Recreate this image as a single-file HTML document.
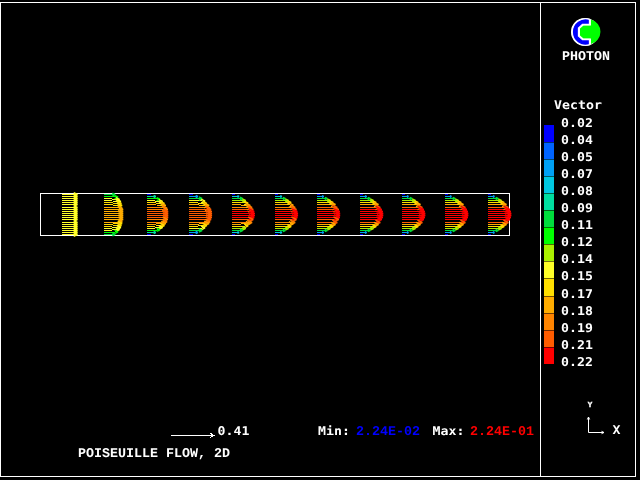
<!DOCTYPE html>
<html lang="en"><head><meta charset="utf-8"><title>PHOTON - POISEUILLE FLOW, 2D</title>
<style>html,body{margin:0;padding:0;background:#000;overflow:hidden}svg{display:block;will-change:transform}text{text-rendering:geometricPrecision}.s{font-family:"DejaVu Sans Mono","Liberation Mono",monospace;font-weight:bold;font-size:12px;fill:#fff}.r{font-family:"Liberation Mono","DejaVu Sans Mono",monospace;font-weight:bold;font-size:13.33px;fill:#fff;text-anchor:middle}.y{font-family:"Liberation Mono","DejaVu Sans Mono",monospace;font-weight:bold;font-size:7.5px;fill:#fff;stroke:#fff;stroke-width:.4px;text-anchor:middle}</style></head><body>
<svg width="640" height="480" viewBox="0 0 640 480">
<rect width="640" height="480" fill="#000"/>
<g shape-rendering="crispEdges" fill="#fff">
<rect x="0" y="2" width="636" height="1"/>
<rect x="0" y="476" width="636" height="1"/>
<rect x="0" y="2" width="1" height="475"/>
<rect x="635" y="2" width="1" height="475"/>
<rect x="540" y="2" width="1" height="475"/>
</g>
<rect x="40.5" y="193.5" width="469" height="42" fill="none" stroke="#fff" stroke-width="1" shape-rendering="crispEdges"/>
<g shape-rendering="crispEdges" stroke-width="1" fill="none" stroke-linejoin="bevel">
<path stroke="#ffff28" d="M62.0 194.5L77.4 194.5"/>
<path stroke="#ffff28" d="M62.0 196.5L77.4 196.5"/>
<path stroke="#ffff28" d="M62.0 198.5L77.4 198.5"/>
<path stroke="#ffff28" d="M62.0 200.5L77.4 200.5"/>
<path stroke="#ffff28" d="M62.0 202.5L77.4 202.5"/>
<path stroke="#ffff28" d="M62.0 204.5L77.4 204.5"/>
<path stroke="#ffff28" d="M62.0 207.5L77.4 207.5"/>
<path stroke="#ffff28" d="M62.0 209.5L77.4 209.5"/>
<path stroke="#ffff28" d="M62.0 211.5L77.4 211.5"/>
<path stroke="#ffff28" d="M62.0 213.5L77.4 213.5"/>
<path stroke="#ffff28" d="M62.0 215.5L77.4 215.5"/>
<path stroke="#ffff28" d="M62.0 217.5L77.4 217.5"/>
<path stroke="#ffff28" d="M62.0 219.5L77.4 219.5"/>
<path stroke="#ffff28" d="M62.0 222.5L77.4 222.5"/>
<path stroke="#ffff28" d="M62.0 224.5L77.4 224.5"/>
<path stroke="#ffff28" d="M62.0 226.5L77.4 226.5"/>
<path stroke="#ffff28" d="M62.0 228.5L77.4 228.5"/>
<path stroke="#ffff28" d="M62.0 230.5L77.4 230.5"/>
<path stroke="#ffff28" d="M62.0 232.5L77.4 232.5"/>
<path stroke="#ffff28" d="M62.0 234.5L77.4 234.5"/>
<path stroke="#00de3c" d="M104.0 194.5L115.0 194.5"/>
<path stroke="#00ff00" d="M104.0 196.5L118.0 197.1"/>
<path stroke="#ffff28" d="M104.0 198.5L119.5 199.5"/>
<path stroke="#ffff28" d="M104.0 200.5L120.8 201.5"/>
<path stroke="#ffde00" d="M104.0 202.5L121.4 203.5"/>
<path stroke="#ffde00" d="M104.0 204.5L122.0 205.5"/>
<path stroke="#ffac00" d="M104.0 207.5L122.3 208.1"/>
<path stroke="#ffac00" d="M104.0 209.5L123.0 209.5"/>
<path stroke="#ffac00" d="M104.0 211.5L123.0 211.5"/>
<path stroke="#ffac00" d="M104.0 213.5L123.0 213.5"/>
<path stroke="#ffac00" d="M104.0 215.5L123.0 215.5"/>
<path stroke="#ffac00" d="M104.0 217.5L123.0 217.5"/>
<path stroke="#ffac00" d="M104.0 219.5L123.0 219.5"/>
<path stroke="#ffac00" d="M104.0 222.5L122.3 221.9"/>
<path stroke="#ffde00" d="M104.0 224.5L122.0 223.5"/>
<path stroke="#ffde00" d="M104.0 226.5L121.4 225.5"/>
<path stroke="#ffff28" d="M104.0 228.5L120.8 227.5"/>
<path stroke="#ffff28" d="M104.0 230.5L119.5 229.5"/>
<path stroke="#00ff00" d="M104.0 232.5L118.0 231.9"/>
<path stroke="#00de3c" d="M104.0 234.5L115.0 234.5"/>
<path stroke="#0000ff" d="M147.0 194.5L151.0 194.5"/>
<path stroke="#00dea0" d="M147.0 196.5L155.7 196.5"/>
<path stroke="#00ff00" d="M147.0 198.5L159.8 199.1"/>
<path stroke="#ffff28" d="M147.0 200.5L162.5 201.5"/>
<path stroke="#ffde00" d="M147.0 202.5L164.4 203.5"/>
<path stroke="#ffac00" d="M147.0 204.5L165.7 205.5"/>
<path stroke="#ff8400" d="M147.0 207.5L167.0 208.1"/>
<path stroke="#ff8400" d="M147.0 209.5L167.5 209.5"/>
<path stroke="#ff5c00" d="M147.0 211.5L168.0 211.5"/>
<path stroke="#ff5c00" d="M147.0 213.5L168.0 213.5"/>
<path stroke="#ff5c00" d="M147.0 215.5L168.0 215.5"/>
<path stroke="#ff5c00" d="M147.0 217.5L168.0 217.5"/>
<path stroke="#ff8400" d="M147.0 219.5L167.5 219.5"/>
<path stroke="#ff8400" d="M147.0 222.5L167.0 221.9"/>
<path stroke="#ffac00" d="M147.0 224.5L165.7 223.5"/>
<path stroke="#ffde00" d="M147.0 226.5L164.4 225.5"/>
<path stroke="#ffff28" d="M147.0 228.5L162.5 227.5"/>
<path stroke="#00ff00" d="M147.0 230.5L159.8 229.9"/>
<path stroke="#00dea0" d="M147.0 232.5L155.7 232.5"/>
<path stroke="#0000ff" d="M147.0 234.5L151.0 234.5"/>
<path stroke="#0000ff" d="M189.0 194.5L193.0 194.5"/>
<path stroke="#00a0f5" d="M189.0 196.5L197.8 196.5"/>
<path stroke="#00de3c" d="M189.0 198.5L202.0 198.5"/>
<path stroke="#ffff28" d="M189.0 200.5L205.0 201.1"/>
<path stroke="#ffde00" d="M189.0 202.5L206.8 203.5"/>
<path stroke="#ffac00" d="M189.0 204.5L209.0 205.5"/>
<path stroke="#ff8400" d="M189.0 207.5L210.0 208.1"/>
<path stroke="#ff5c00" d="M189.0 209.5L211.0 209.5"/>
<path stroke="#ff5c00" d="M189.0 211.5L211.5 211.5"/>
<path stroke="#ff5c00" d="M189.0 213.5L211.8 213.5"/>
<path stroke="#ff5c00" d="M189.0 215.5L211.8 215.5"/>
<path stroke="#ff5c00" d="M189.0 217.5L211.5 217.5"/>
<path stroke="#ff5c00" d="M189.0 219.5L211.0 219.5"/>
<path stroke="#ff8400" d="M189.0 222.5L210.0 221.9"/>
<path stroke="#ffac00" d="M189.0 224.5L209.0 223.5"/>
<path stroke="#ffde00" d="M189.0 226.5L206.8 225.5"/>
<path stroke="#ffff28" d="M189.0 228.5L205.0 227.9"/>
<path stroke="#00de3c" d="M189.0 230.5L202.0 230.5"/>
<path stroke="#00a0f5" d="M189.0 232.5L197.8 232.5"/>
<path stroke="#0000ff" d="M189.0 234.5L193.0 234.5"/>
<path stroke="#0000ff" d="M232.0 194.5L235.2 194.5"/>
<path stroke="#00c8e1" d="M232.0 196.5L239.0 196.5"/>
<path stroke="#00de3c" d="M232.0 198.5L242.5 198.5"/>
<path stroke="#aaf000" d="M232.0 200.5L245.5 200.5"/>
<path stroke="#ffde00" d="M232.0 202.5L248.1 203.1"/>
<path stroke="#ffac00" d="M232.0 204.5L250.2 205.5"/>
<path stroke="#ff8400" d="M232.0 207.5L252.0 207.5"/>
<path stroke="#ff5c00" d="M232.0 209.5L253.2 209.5"/>
<path stroke="#ff0000" d="M232.0 211.5L254.1 211.5"/>
<path stroke="#ff0000" d="M232.0 213.5L254.5 213.5"/>
<path stroke="#ff0000" d="M232.0 215.5L254.5 215.5"/>
<path stroke="#ff0000" d="M232.0 217.5L254.1 217.5"/>
<path stroke="#ff5c00" d="M232.0 219.5L253.2 219.5"/>
<path stroke="#ff8400" d="M232.0 222.5L252.0 222.5"/>
<path stroke="#ffac00" d="M232.0 224.5L250.2 223.5"/>
<path stroke="#ffde00" d="M232.0 226.5L248.1 225.9"/>
<path stroke="#aaf000" d="M232.0 228.5L245.5 228.5"/>
<path stroke="#00de3c" d="M232.0 230.5L242.5 230.5"/>
<path stroke="#00c8e1" d="M232.0 232.5L239.0 232.5"/>
<path stroke="#0000ff" d="M232.0 234.5L235.2 234.5"/>
<path stroke="#0000ff" d="M275.0 194.5L278.0 194.5"/>
<path stroke="#00c8e1" d="M275.0 196.5L281.8 196.5"/>
<path stroke="#00de3c" d="M275.0 198.5L285.3 198.5"/>
<path stroke="#aaf000" d="M275.0 200.5L288.4 200.5"/>
<path stroke="#ffde00" d="M275.0 202.5L291.1 202.5"/>
<path stroke="#ffac00" d="M275.0 204.5L293.3 205.1"/>
<path stroke="#ff8400" d="M275.0 207.5L295.1 207.5"/>
<path stroke="#ff5c00" d="M275.0 209.5L296.4 209.5"/>
<path stroke="#ff0000" d="M275.0 211.5L297.3 211.5"/>
<path stroke="#ff0000" d="M275.0 213.5L297.8 213.5"/>
<path stroke="#ff0000" d="M275.0 215.5L297.8 215.5"/>
<path stroke="#ff0000" d="M275.0 217.5L297.3 217.5"/>
<path stroke="#ff5c00" d="M275.0 219.5L296.4 219.5"/>
<path stroke="#ff8400" d="M275.0 222.5L295.1 222.5"/>
<path stroke="#ffac00" d="M275.0 224.5L293.3 223.9"/>
<path stroke="#ffde00" d="M275.0 226.5L291.1 226.5"/>
<path stroke="#aaf000" d="M275.0 228.5L288.4 228.5"/>
<path stroke="#00de3c" d="M275.0 230.5L285.3 230.5"/>
<path stroke="#00c8e1" d="M275.0 232.5L281.8 232.5"/>
<path stroke="#0000ff" d="M275.0 234.5L278.0 234.5"/>
<path stroke="#0000ff" d="M317.0 194.5L320.0 194.5"/>
<path stroke="#00a0f5" d="M317.0 196.5L323.6 196.5"/>
<path stroke="#00de3c" d="M317.0 198.5L327.2 198.5"/>
<path stroke="#aaf000" d="M317.0 200.5L330.4 200.5"/>
<path stroke="#ffde00" d="M317.0 202.5L333.1 202.5"/>
<path stroke="#ffac00" d="M317.0 204.5L335.4 204.5"/>
<path stroke="#ff5c00" d="M317.0 207.5L337.2 207.5"/>
<path stroke="#ff5c00" d="M317.0 209.5L338.6 209.5"/>
<path stroke="#ff0000" d="M317.0 211.5L339.5 211.5"/>
<path stroke="#ff0000" d="M317.0 213.5L339.9 213.5"/>
<path stroke="#ff0000" d="M317.0 215.5L339.9 215.5"/>
<path stroke="#ff0000" d="M317.0 217.5L339.5 217.5"/>
<path stroke="#ff5c00" d="M317.0 219.5L338.6 219.5"/>
<path stroke="#ff5c00" d="M317.0 222.5L337.2 222.5"/>
<path stroke="#ffac00" d="M317.0 224.5L335.4 224.5"/>
<path stroke="#ffde00" d="M317.0 226.5L333.1 226.5"/>
<path stroke="#aaf000" d="M317.0 228.5L330.4 228.5"/>
<path stroke="#00de3c" d="M317.0 230.5L327.2 230.5"/>
<path stroke="#00a0f5" d="M317.0 232.5L323.6 232.5"/>
<path stroke="#0000ff" d="M317.0 234.5L320.0 234.5"/>
<path stroke="#0000ff" d="M360.0 194.5L363.0 194.5"/>
<path stroke="#00a0f5" d="M360.0 196.5L366.5 196.5"/>
<path stroke="#00de3c" d="M360.0 198.5L370.2 198.5"/>
<path stroke="#aaf000" d="M360.0 200.5L373.4 200.5"/>
<path stroke="#ffde00" d="M360.0 202.5L376.1 202.5"/>
<path stroke="#ffac00" d="M360.0 204.5L378.4 204.5"/>
<path stroke="#ff5c00" d="M360.0 207.5L380.2 207.5"/>
<path stroke="#ff0000" d="M360.0 209.5L381.6 209.5"/>
<path stroke="#ff0000" d="M360.0 211.5L382.5 211.5"/>
<path stroke="#ff0000" d="M360.0 213.5L383.0 213.5"/>
<path stroke="#ff0000" d="M360.0 215.5L383.0 215.5"/>
<path stroke="#ff0000" d="M360.0 217.5L382.5 217.5"/>
<path stroke="#ff0000" d="M360.0 219.5L381.6 219.5"/>
<path stroke="#ff5c00" d="M360.0 222.5L380.2 222.5"/>
<path stroke="#ffac00" d="M360.0 224.5L378.4 224.5"/>
<path stroke="#ffde00" d="M360.0 226.5L376.1 226.5"/>
<path stroke="#aaf000" d="M360.0 228.5L373.4 228.5"/>
<path stroke="#00de3c" d="M360.0 230.5L370.2 230.5"/>
<path stroke="#00a0f5" d="M360.0 232.5L366.5 232.5"/>
<path stroke="#0000ff" d="M360.0 234.5L363.0 234.5"/>
<path stroke="#0000ff" d="M402.0 194.5L405.0 194.5"/>
<path stroke="#00a0f5" d="M402.0 196.5L408.4 196.5"/>
<path stroke="#00de3c" d="M402.0 198.5L412.1 198.5"/>
<path stroke="#aaf000" d="M402.0 200.5L415.4 200.5"/>
<path stroke="#ffde00" d="M402.0 202.5L418.1 202.5"/>
<path stroke="#ffac00" d="M402.0 204.5L420.4 204.5"/>
<path stroke="#ff5c00" d="M402.0 207.5L422.3 207.5"/>
<path stroke="#ff0000" d="M402.0 209.5L423.7 209.5"/>
<path stroke="#ff0000" d="M402.0 211.5L424.6 211.5"/>
<path stroke="#ff0000" d="M402.0 213.5L425.1 213.5"/>
<path stroke="#ff0000" d="M402.0 215.5L425.1 215.5"/>
<path stroke="#ff0000" d="M402.0 217.5L424.6 217.5"/>
<path stroke="#ff0000" d="M402.0 219.5L423.7 219.5"/>
<path stroke="#ff5c00" d="M402.0 222.5L422.3 222.5"/>
<path stroke="#ffac00" d="M402.0 224.5L420.4 224.5"/>
<path stroke="#ffde00" d="M402.0 226.5L418.1 226.5"/>
<path stroke="#aaf000" d="M402.0 228.5L415.4 228.5"/>
<path stroke="#00de3c" d="M402.0 230.5L412.1 230.5"/>
<path stroke="#00a0f5" d="M402.0 232.5L408.4 232.5"/>
<path stroke="#0000ff" d="M402.0 234.5L405.0 234.5"/>
<path stroke="#0000ff" d="M445.0 194.5L448.0 194.5"/>
<path stroke="#00a0f5" d="M445.0 196.5L451.4 196.5"/>
<path stroke="#00de3c" d="M445.0 198.5L455.1 198.5"/>
<path stroke="#aaf000" d="M445.0 200.5L458.4 200.5"/>
<path stroke="#ffde00" d="M445.0 202.5L461.1 202.5"/>
<path stroke="#ffac00" d="M445.0 204.5L463.4 204.5"/>
<path stroke="#ff5c00" d="M445.0 207.5L465.3 207.5"/>
<path stroke="#ff0000" d="M445.0 209.5L466.7 209.5"/>
<path stroke="#ff0000" d="M445.0 211.5L467.6 211.5"/>
<path stroke="#ff0000" d="M445.0 213.5L468.1 213.5"/>
<path stroke="#ff0000" d="M445.0 215.5L468.1 215.5"/>
<path stroke="#ff0000" d="M445.0 217.5L467.6 217.5"/>
<path stroke="#ff0000" d="M445.0 219.5L466.7 219.5"/>
<path stroke="#ff5c00" d="M445.0 222.5L465.3 222.5"/>
<path stroke="#ffac00" d="M445.0 224.5L463.4 224.5"/>
<path stroke="#ffde00" d="M445.0 226.5L461.1 226.5"/>
<path stroke="#aaf000" d="M445.0 228.5L458.4 228.5"/>
<path stroke="#00de3c" d="M445.0 230.5L455.1 230.5"/>
<path stroke="#00a0f5" d="M445.0 232.5L451.4 232.5"/>
<path stroke="#0000ff" d="M445.0 234.5L448.0 234.5"/>
<path stroke="#0000ff" d="M488.0 194.5L491.0 194.5"/>
<path stroke="#00a0f5" d="M488.0 196.5L494.4 196.5"/>
<path stroke="#00de3c" d="M488.0 198.5L498.1 198.5"/>
<path stroke="#aaf000" d="M488.0 200.5L501.4 200.5"/>
<path stroke="#ffde00" d="M488.0 202.5L504.1 202.5"/>
<path stroke="#ffac00" d="M488.0 204.5L506.4 204.5"/>
<path stroke="#ff5c00" d="M488.0 207.5L508.3 207.5"/>
<path stroke="#ff0000" d="M488.0 209.5L509.7 209.5"/>
<path stroke="#ff0000" d="M488.0 211.5L510.6 211.5"/>
<path stroke="#ff0000" d="M488.0 213.5L511.1 213.5"/>
<path stroke="#ff0000" d="M488.0 215.5L511.1 215.5"/>
<path stroke="#ff0000" d="M488.0 217.5L510.6 217.5"/>
<path stroke="#ff0000" d="M488.0 219.5L509.7 219.5"/>
<path stroke="#ff5c00" d="M488.0 222.5L508.3 222.5"/>
<path stroke="#ffac00" d="M488.0 224.5L506.4 224.5"/>
<path stroke="#ffde00" d="M488.0 226.5L504.1 226.5"/>
<path stroke="#aaf000" d="M488.0 228.5L501.4 228.5"/>
<path stroke="#00de3c" d="M488.0 230.5L498.1 230.5"/>
<path stroke="#00a0f5" d="M488.0 232.5L494.4 232.5"/>
<path stroke="#0000ff" d="M488.0 234.5L491.0 234.5"/>
</g>
<g fill="none" stroke-width="1.45" stroke-linejoin="bevel">
<path stroke="#ffff28" d="M73.7 192.7L77.4 194.5L73.7 196.3"/>
<path stroke="#ffff28" d="M73.7 194.7L77.4 196.5L73.7 198.3"/>
<path stroke="#ffff28" d="M73.7 196.7L77.4 198.5L73.7 200.3"/>
<path stroke="#ffff28" d="M73.7 198.7L77.4 200.5L73.7 202.3"/>
<path stroke="#ffff28" d="M73.7 200.7L77.4 202.5L73.7 204.3"/>
<path stroke="#ffff28" d="M73.7 202.7L77.4 204.5L73.7 206.3"/>
<path stroke="#ffff28" d="M73.7 205.7L77.4 207.5L73.7 209.3"/>
<path stroke="#ffff28" d="M73.7 207.7L77.4 209.5L73.7 211.3"/>
<path stroke="#ffff28" d="M73.7 209.7L77.4 211.5L73.7 213.3"/>
<path stroke="#ffff28" d="M73.7 211.7L77.4 213.5L73.7 215.3"/>
<path stroke="#ffff28" d="M73.7 213.7L77.4 215.5L73.7 217.3"/>
<path stroke="#ffff28" d="M73.7 215.7L77.4 217.5L73.7 219.3"/>
<path stroke="#ffff28" d="M73.7 217.7L77.4 219.5L73.7 221.3"/>
<path stroke="#ffff28" d="M73.7 220.7L77.4 222.5L73.7 224.3"/>
<path stroke="#ffff28" d="M73.7 222.7L77.4 224.5L73.7 226.3"/>
<path stroke="#ffff28" d="M73.7 224.7L77.4 226.5L73.7 228.3"/>
<path stroke="#ffff28" d="M73.7 226.7L77.4 228.5L73.7 230.3"/>
<path stroke="#ffff28" d="M73.7 228.7L77.4 230.5L73.7 232.3"/>
<path stroke="#ffff28" d="M73.7 230.7L77.4 232.5L73.7 234.3"/>
<path stroke="#ffff28" d="M73.7 232.7L77.4 234.5L73.7 236.3"/>
<path stroke="#00de3c" d="M112.4 193.2L115.0 194.5L112.4 195.8"/>
<path stroke="#00ff00" d="M114.6 195.4L118.0 197.1L114.6 198.8"/>
<path stroke="#ffff28" d="M115.8 197.6L119.5 199.5L115.8 201.4"/>
<path stroke="#ffff28" d="M116.8 199.5L120.8 201.5L116.8 203.5"/>
<path stroke="#ffde00" d="M117.2 201.4L121.4 203.5L117.2 205.6"/>
<path stroke="#ffde00" d="M117.7 203.3L122.0 205.5L117.7 207.7"/>
<path stroke="#ffac00" d="M117.9 205.9L122.3 208.1L117.9 210.3"/>
<path stroke="#ffac00" d="M118.4 207.2L123.0 209.5L118.4 211.8"/>
<path stroke="#ffac00" d="M118.4 209.2L123.0 211.5L118.4 213.8"/>
<path stroke="#ffac00" d="M118.4 211.2L123.0 213.5L118.4 215.8"/>
<path stroke="#ffac00" d="M118.4 213.2L123.0 215.5L118.4 217.8"/>
<path stroke="#ffac00" d="M118.4 215.2L123.0 217.5L118.4 219.8"/>
<path stroke="#ffac00" d="M118.4 217.2L123.0 219.5L118.4 221.8"/>
<path stroke="#ffac00" d="M117.9 219.7L122.3 221.9L117.9 224.1"/>
<path stroke="#ffde00" d="M117.7 221.3L122.0 223.5L117.7 225.7"/>
<path stroke="#ffde00" d="M117.2 223.4L121.4 225.5L117.2 227.6"/>
<path stroke="#ffff28" d="M116.8 225.5L120.8 227.5L116.8 229.5"/>
<path stroke="#ffff28" d="M115.8 227.6L119.5 229.5L115.8 231.4"/>
<path stroke="#00ff00" d="M114.6 230.2L118.0 231.9L114.6 233.6"/>
<path stroke="#00de3c" d="M112.4 233.2L115.0 234.5L112.4 235.8"/>
<path stroke="#00dea0" d="M153.6 195.5L155.7 196.5L153.6 197.5"/>
<path stroke="#00ff00" d="M156.7 197.6L159.8 199.1L156.7 200.6"/>
<path stroke="#ffff28" d="M158.8 199.6L162.5 201.5L158.8 203.4"/>
<path stroke="#ffde00" d="M160.2 201.4L164.4 203.5L160.2 205.6"/>
<path stroke="#ffac00" d="M161.2 203.3L165.7 205.5L161.2 207.7"/>
<path stroke="#ff8400" d="M162.2 205.7L167.0 208.1L162.2 210.5"/>
<path stroke="#ff8400" d="M162.6 207.0L167.5 209.5L162.6 212.0"/>
<path stroke="#ff5c00" d="M163.0 209.0L168.0 211.5L163.0 214.0"/>
<path stroke="#ff5c00" d="M163.0 211.0L168.0 213.5L163.0 216.0"/>
<path stroke="#ff5c00" d="M163.0 213.0L168.0 215.5L163.0 218.0"/>
<path stroke="#ff5c00" d="M163.0 215.0L168.0 217.5L163.0 220.0"/>
<path stroke="#ff8400" d="M162.6 217.0L167.5 219.5L162.6 222.0"/>
<path stroke="#ff8400" d="M162.2 219.5L167.0 221.9L162.2 224.3"/>
<path stroke="#ffac00" d="M161.2 221.3L165.7 223.5L161.2 225.7"/>
<path stroke="#ffde00" d="M160.2 223.4L164.4 225.5L160.2 227.6"/>
<path stroke="#ffff28" d="M158.8 225.6L162.5 227.5L158.8 229.4"/>
<path stroke="#00ff00" d="M156.7 228.4L159.8 229.9L156.7 231.4"/>
<path stroke="#00dea0" d="M153.6 231.5L155.7 232.5L153.6 233.5"/>
<path stroke="#00a0f5" d="M195.7 195.4L197.8 196.5L195.7 197.6"/>
<path stroke="#00de3c" d="M198.9 196.9L202.0 198.5L198.9 200.1"/>
<path stroke="#ffff28" d="M201.2 199.2L205.0 201.1L201.2 203.0"/>
<path stroke="#ffde00" d="M202.5 201.4L206.8 203.5L202.5 205.6"/>
<path stroke="#ffac00" d="M204.2 203.1L209.0 205.5L204.2 207.9"/>
<path stroke="#ff8400" d="M205.0 205.6L210.0 208.1L205.0 210.6"/>
<path stroke="#ff5c00" d="M205.7 206.9L211.0 209.5L205.7 212.1"/>
<path stroke="#ff5c00" d="M206.1 208.8L211.5 211.5L206.1 214.2"/>
<path stroke="#ff5c00" d="M206.3 210.8L211.8 213.5L206.3 216.2"/>
<path stroke="#ff5c00" d="M206.3 212.8L211.8 215.5L206.3 218.2"/>
<path stroke="#ff5c00" d="M206.1 214.8L211.5 217.5L206.1 220.2"/>
<path stroke="#ff5c00" d="M205.7 216.9L211.0 219.5L205.7 222.1"/>
<path stroke="#ff8400" d="M205.0 219.4L210.0 221.9L205.0 224.4"/>
<path stroke="#ffac00" d="M204.2 221.1L209.0 223.5L204.2 225.9"/>
<path stroke="#ffde00" d="M202.5 223.4L206.8 225.5L202.5 227.6"/>
<path stroke="#ffff28" d="M201.2 226.0L205.0 227.9L201.2 229.8"/>
<path stroke="#00de3c" d="M198.9 228.9L202.0 230.5L198.9 232.1"/>
<path stroke="#00a0f5" d="M195.7 231.4L197.8 232.5L195.7 233.6"/>
<path stroke="#00c8e1" d="M237.4 195.7L239.0 196.5L237.4 197.3"/>
<path stroke="#00de3c" d="M240.0 197.2L242.5 198.5L240.0 199.8"/>
<path stroke="#aaf000" d="M242.3 198.9L245.5 200.5L242.3 202.1"/>
<path stroke="#ffde00" d="M244.2 201.2L248.1 203.1L244.2 205.0"/>
<path stroke="#ffac00" d="M245.9 203.3L250.2 205.5L245.9 207.7"/>
<path stroke="#ff8400" d="M247.2 205.1L252.0 207.5L247.2 209.9"/>
<path stroke="#ff5c00" d="M248.1 207.0L253.2 209.5L248.1 212.0"/>
<path stroke="#ff0000" d="M248.8 208.8L254.1 211.5L248.8 214.2"/>
<path stroke="#ff0000" d="M249.1 210.8L254.5 213.5L249.1 216.2"/>
<path stroke="#ff0000" d="M249.1 212.8L254.5 215.5L249.1 218.2"/>
<path stroke="#ff0000" d="M248.8 214.8L254.1 217.5L248.8 220.2"/>
<path stroke="#ff5c00" d="M248.1 217.0L253.2 219.5L248.1 222.0"/>
<path stroke="#ff8400" d="M247.2 220.1L252.0 222.5L247.2 224.9"/>
<path stroke="#ffac00" d="M245.9 221.3L250.2 223.5L245.9 225.7"/>
<path stroke="#ffde00" d="M244.2 224.0L248.1 225.9L244.2 227.8"/>
<path stroke="#aaf000" d="M242.3 226.9L245.5 228.5L242.3 230.1"/>
<path stroke="#00de3c" d="M240.0 229.2L242.5 230.5L240.0 231.8"/>
<path stroke="#00c8e1" d="M237.4 231.7L239.0 232.5L237.4 233.3"/>
<path stroke="#00c8e1" d="M280.2 195.7L281.8 196.5L280.2 197.3"/>
<path stroke="#00de3c" d="M282.9 197.3L285.3 198.5L282.9 199.7"/>
<path stroke="#aaf000" d="M285.2 198.9L288.4 200.5L285.2 202.1"/>
<path stroke="#ffde00" d="M287.2 200.6L291.1 202.5L287.2 204.4"/>
<path stroke="#ffac00" d="M288.9 202.9L293.3 205.1L288.9 207.3"/>
<path stroke="#ff8400" d="M290.3 205.1L295.1 207.5L290.3 209.9"/>
<path stroke="#ff5c00" d="M291.3 206.9L296.4 209.5L291.3 212.1"/>
<path stroke="#ff0000" d="M292.0 208.8L297.3 211.5L292.0 214.2"/>
<path stroke="#ff0000" d="M292.3 210.8L297.8 213.5L292.3 216.2"/>
<path stroke="#ff0000" d="M292.3 212.8L297.8 215.5L292.3 218.2"/>
<path stroke="#ff0000" d="M292.0 214.8L297.3 217.5L292.0 220.2"/>
<path stroke="#ff5c00" d="M291.3 216.9L296.4 219.5L291.3 222.1"/>
<path stroke="#ff8400" d="M290.3 220.1L295.1 222.5L290.3 224.9"/>
<path stroke="#ffac00" d="M288.9 221.7L293.3 223.9L288.9 226.1"/>
<path stroke="#ffde00" d="M287.2 224.6L291.1 226.5L287.2 228.4"/>
<path stroke="#aaf000" d="M285.2 226.9L288.4 228.5L285.2 230.1"/>
<path stroke="#00de3c" d="M282.9 229.3L285.3 230.5L282.9 231.7"/>
<path stroke="#00c8e1" d="M280.2 231.7L281.8 232.5L280.2 233.3"/>
<path stroke="#00a0f5" d="M322.0 195.7L323.6 196.5L322.0 197.3"/>
<path stroke="#00de3c" d="M324.8 197.3L327.2 198.5L324.8 199.7"/>
<path stroke="#aaf000" d="M327.2 198.9L330.4 200.5L327.2 202.1"/>
<path stroke="#ffde00" d="M329.2 200.6L333.1 202.5L329.2 204.4"/>
<path stroke="#ffac00" d="M331.0 202.3L335.4 204.5L331.0 206.7"/>
<path stroke="#ff5c00" d="M332.3 205.1L337.2 207.5L332.3 209.9"/>
<path stroke="#ff5c00" d="M333.4 206.9L338.6 209.5L333.4 212.1"/>
<path stroke="#ff0000" d="M334.1 208.8L339.5 211.5L334.1 214.2"/>
<path stroke="#ff0000" d="M334.4 210.8L339.9 213.5L334.4 216.2"/>
<path stroke="#ff0000" d="M334.4 212.8L339.9 215.5L334.4 218.2"/>
<path stroke="#ff0000" d="M334.1 214.8L339.5 217.5L334.1 220.2"/>
<path stroke="#ff5c00" d="M333.4 216.9L338.6 219.5L333.4 222.1"/>
<path stroke="#ff5c00" d="M332.3 220.1L337.2 222.5L332.3 224.9"/>
<path stroke="#ffac00" d="M331.0 222.3L335.4 224.5L331.0 226.7"/>
<path stroke="#ffde00" d="M329.2 224.6L333.1 226.5L329.2 228.4"/>
<path stroke="#aaf000" d="M327.2 226.9L330.4 228.5L327.2 230.1"/>
<path stroke="#00de3c" d="M324.8 229.3L327.2 230.5L324.8 231.7"/>
<path stroke="#00a0f5" d="M322.0 231.7L323.6 232.5L322.0 233.3"/>
<path stroke="#00a0f5" d="M364.9 195.7L366.5 196.5L364.9 197.3"/>
<path stroke="#00de3c" d="M367.7 197.3L370.2 198.5L367.7 199.7"/>
<path stroke="#aaf000" d="M370.2 198.9L373.4 200.5L370.2 202.1"/>
<path stroke="#ffde00" d="M372.3 200.6L376.1 202.5L372.3 204.4"/>
<path stroke="#ffac00" d="M374.0 202.3L378.4 204.5L374.0 206.7"/>
<path stroke="#ff5c00" d="M375.4 205.1L380.2 207.5L375.4 209.9"/>
<path stroke="#ff0000" d="M376.4 206.9L381.6 209.5L376.4 212.1"/>
<path stroke="#ff0000" d="M377.1 208.8L382.5 211.5L377.1 214.2"/>
<path stroke="#ff0000" d="M377.5 210.7L383.0 213.5L377.5 216.3"/>
<path stroke="#ff0000" d="M377.5 212.7L383.0 215.5L377.5 218.3"/>
<path stroke="#ff0000" d="M377.1 214.8L382.5 217.5L377.1 220.2"/>
<path stroke="#ff0000" d="M376.4 216.9L381.6 219.5L376.4 222.1"/>
<path stroke="#ff5c00" d="M375.4 220.1L380.2 222.5L375.4 224.9"/>
<path stroke="#ffac00" d="M374.0 222.3L378.4 224.5L374.0 226.7"/>
<path stroke="#ffde00" d="M372.3 224.6L376.1 226.5L372.3 228.4"/>
<path stroke="#aaf000" d="M370.2 226.9L373.4 228.5L370.2 230.1"/>
<path stroke="#00de3c" d="M367.7 229.3L370.2 230.5L367.7 231.7"/>
<path stroke="#00a0f5" d="M364.9 231.7L366.5 232.5L364.9 233.3"/>
<path stroke="#00a0f5" d="M406.9 195.7L408.4 196.5L406.9 197.3"/>
<path stroke="#00de3c" d="M409.7 197.3L412.1 198.5L409.7 199.7"/>
<path stroke="#aaf000" d="M412.1 198.9L415.4 200.5L412.1 202.1"/>
<path stroke="#ffde00" d="M414.3 200.6L418.1 202.5L414.3 204.4"/>
<path stroke="#ffac00" d="M416.0 202.3L420.4 204.5L416.0 206.7"/>
<path stroke="#ff5c00" d="M417.4 205.1L422.3 207.5L417.4 209.9"/>
<path stroke="#ff0000" d="M418.5 206.9L423.7 209.5L418.5 212.1"/>
<path stroke="#ff0000" d="M419.2 208.8L424.6 211.5L419.2 214.2"/>
<path stroke="#ff0000" d="M419.5 210.7L425.1 213.5L419.5 216.3"/>
<path stroke="#ff0000" d="M419.5 212.7L425.1 215.5L419.5 218.3"/>
<path stroke="#ff0000" d="M419.2 214.8L424.6 217.5L419.2 220.2"/>
<path stroke="#ff0000" d="M418.5 216.9L423.7 219.5L418.5 222.1"/>
<path stroke="#ff5c00" d="M417.4 220.1L422.3 222.5L417.4 224.9"/>
<path stroke="#ffac00" d="M416.0 222.3L420.4 224.5L416.0 226.7"/>
<path stroke="#ffde00" d="M414.3 224.6L418.1 226.5L414.3 228.4"/>
<path stroke="#aaf000" d="M412.1 226.9L415.4 228.5L412.1 230.1"/>
<path stroke="#00de3c" d="M409.7 229.3L412.1 230.5L409.7 231.7"/>
<path stroke="#00a0f5" d="M406.9 231.7L408.4 232.5L406.9 233.3"/>
<path stroke="#00a0f5" d="M449.9 195.7L451.4 196.5L449.9 197.3"/>
<path stroke="#00de3c" d="M452.7 197.3L455.1 198.5L452.7 199.7"/>
<path stroke="#aaf000" d="M455.1 198.9L458.4 200.5L455.1 202.1"/>
<path stroke="#ffde00" d="M457.3 200.6L461.1 202.5L457.3 204.4"/>
<path stroke="#ffac00" d="M459.0 202.3L463.4 204.5L459.0 206.7"/>
<path stroke="#ff5c00" d="M460.4 205.1L465.3 207.5L460.4 209.9"/>
<path stroke="#ff0000" d="M461.5 206.9L466.7 209.5L461.5 212.1"/>
<path stroke="#ff0000" d="M462.2 208.8L467.6 211.5L462.2 214.2"/>
<path stroke="#ff0000" d="M462.5 210.7L468.1 213.5L462.5 216.3"/>
<path stroke="#ff0000" d="M462.5 212.7L468.1 215.5L462.5 218.3"/>
<path stroke="#ff0000" d="M462.2 214.8L467.6 217.5L462.2 220.2"/>
<path stroke="#ff0000" d="M461.5 216.9L466.7 219.5L461.5 222.1"/>
<path stroke="#ff5c00" d="M460.4 220.1L465.3 222.5L460.4 224.9"/>
<path stroke="#ffac00" d="M459.0 222.3L463.4 224.5L459.0 226.7"/>
<path stroke="#ffde00" d="M457.3 224.6L461.1 226.5L457.3 228.4"/>
<path stroke="#aaf000" d="M455.1 226.9L458.4 228.5L455.1 230.1"/>
<path stroke="#00de3c" d="M452.7 229.3L455.1 230.5L452.7 231.7"/>
<path stroke="#00a0f5" d="M449.9 231.7L451.4 232.5L449.9 233.3"/>
<path stroke="#00a0f5" d="M492.9 195.7L494.4 196.5L492.9 197.3"/>
<path stroke="#00de3c" d="M495.7 197.3L498.1 198.5L495.7 199.7"/>
<path stroke="#aaf000" d="M498.1 198.9L501.4 200.5L498.1 202.1"/>
<path stroke="#ffde00" d="M500.3 200.6L504.1 202.5L500.3 204.4"/>
<path stroke="#ffac00" d="M502.0 202.3L506.4 204.5L502.0 206.7"/>
<path stroke="#ff5c00" d="M503.4 205.1L508.3 207.5L503.4 209.9"/>
<path stroke="#ff0000" d="M504.5 206.9L509.7 209.5L504.5 212.1"/>
<path stroke="#ff0000" d="M505.2 208.8L510.6 211.5L505.2 214.2"/>
<path stroke="#ff0000" d="M505.5 210.7L511.1 213.5L505.5 216.3"/>
<path stroke="#ff0000" d="M505.5 212.7L511.1 215.5L505.5 218.3"/>
<path stroke="#ff0000" d="M505.2 214.8L510.6 217.5L505.2 220.2"/>
<path stroke="#ff0000" d="M504.5 216.9L509.7 219.5L504.5 222.1"/>
<path stroke="#ff5c00" d="M503.4 220.1L508.3 222.5L503.4 224.9"/>
<path stroke="#ffac00" d="M502.0 222.3L506.4 224.5L502.0 226.7"/>
<path stroke="#ffde00" d="M500.3 224.6L504.1 226.5L500.3 228.4"/>
<path stroke="#aaf000" d="M498.1 226.9L501.4 228.5L498.1 230.1"/>
<path stroke="#00de3c" d="M495.7 229.3L498.1 230.5L495.7 231.7"/>
<path stroke="#00a0f5" d="M492.9 231.7L494.4 232.5L492.9 233.3"/>
</g>
<path d="M171 435.5H214M210.5 433.5L214 435.5L210.5 437.5" stroke="#fff" stroke-width="1" fill="none" shape-rendering="crispEdges"/>
<text class="s" x="197.73 205.00 212.27 219.55" y="435" transform="scale(1.1,1)">0.41</text>
<text class="s" x="289.09 296.36 303.64 310.91" y="435" transform="scale(1.1,1)">Min:</text>
<text class="s" x="393.18 400.45 407.73 415.00" y="435" transform="scale(1.1,1)">Max:</text>
<text class="s" x="503.64 510.91 518.18 525.45 532.73 540.00" y="109" transform="scale(1.1,1)">Vector</text>
<text class="s" x="510.00 517.27 524.55 531.82" y="127" transform="scale(1.1,1)">0.02</text>
<text class="s" x="510.00 517.27 524.55 531.82" y="144.05" transform="scale(1.1,1)">0.04</text>
<text class="s" x="510.00 517.27 524.55 531.82" y="161.1" transform="scale(1.1,1)">0.05</text>
<text class="s" x="510.00 517.27 524.55 531.82" y="178.15" transform="scale(1.1,1)">0.07</text>
<text class="s" x="510.00 517.27 524.55 531.82" y="195.2" transform="scale(1.1,1)">0.08</text>
<text class="s" x="510.00 517.27 524.55 531.82" y="212.25" transform="scale(1.1,1)">0.09</text>
<text class="s" x="510.00 517.27 524.55 531.82" y="229.3" transform="scale(1.1,1)">0.11</text>
<text class="s" x="510.00 517.27 524.55 531.82" y="246.35" transform="scale(1.1,1)">0.12</text>
<text class="s" x="510.00 517.27 524.55 531.82" y="263.4" transform="scale(1.1,1)">0.14</text>
<text class="s" x="510.00 517.27 524.55 531.82" y="280.45" transform="scale(1.1,1)">0.15</text>
<text class="s" x="510.00 517.27 524.55 531.82" y="297.5" transform="scale(1.1,1)">0.17</text>
<text class="s" x="510.00 517.27 524.55 531.82" y="314.55" transform="scale(1.1,1)">0.18</text>
<text class="s" x="510.00 517.27 524.55 531.82" y="331.6" transform="scale(1.1,1)">0.19</text>
<text class="s" x="510.00 517.27 524.55 531.82" y="348.65" transform="scale(1.1,1)">0.21</text>
<text class="s" x="510.00 517.27 524.55 531.82" y="365.7" transform="scale(1.1,1)">0.22</text>
<text class="s" x="556.82" y="434" transform="scale(1.1,1)">X</text>
<text class="r" x="360.00 368.00 376.00 384.00 392.00 400.00 408.00 416.00" y="435" style="fill:#0000ff">2.24E-02</text>
<text class="r" x="474.00 482.00 490.00 498.00 506.00 514.00 522.00 530.00" y="435" style="fill:#ff0000">2.24E-01</text>
<text class="r" x="82.00 90.00 98.00 106.00 114.00 122.00 130.00 138.00 146.00 154.00 162.00 170.00 178.00 186.00 194.00 202.00 210.00 218.00 226.00" y="457">POISEUILLE FLOW, 2D</text>
<text class="r" x="566.00 574.00 582.00 590.00 598.00 606.00" y="60">PHOTON</text>
<g shape-rendering="crispEdges">
<rect x="544" y="125" width="10" height="17" fill="#0000ff"/>
<rect x="544" y="142" width="10" height="17" fill="#0064ff"/>
<rect x="544" y="142" width="10" height="1" fill="#000" fill-opacity="0.55"/>
<rect x="544" y="159" width="10" height="17" fill="#00a0f5"/>
<rect x="544" y="159" width="10" height="1" fill="#000" fill-opacity="0.55"/>
<rect x="544" y="176" width="10" height="17" fill="#00c8e1"/>
<rect x="544" y="176" width="10" height="1" fill="#000" fill-opacity="0.55"/>
<rect x="544" y="193" width="10" height="17" fill="#00dea0"/>
<rect x="544" y="193" width="10" height="1" fill="#000" fill-opacity="0.55"/>
<rect x="544" y="210" width="10" height="17" fill="#00de3c"/>
<rect x="544" y="210" width="10" height="1" fill="#000" fill-opacity="0.55"/>
<rect x="544" y="227" width="10" height="17" fill="#00ff00"/>
<rect x="544" y="227" width="10" height="1" fill="#000" fill-opacity="0.55"/>
<rect x="544" y="244" width="10" height="17" fill="#aaf000"/>
<rect x="544" y="244" width="10" height="1" fill="#000" fill-opacity="0.55"/>
<rect x="544" y="261" width="10" height="17" fill="#ffff28"/>
<rect x="544" y="261" width="10" height="1" fill="#000" fill-opacity="0.55"/>
<rect x="544" y="278" width="10" height="18" fill="#ffde00"/>
<rect x="544" y="278" width="10" height="1" fill="#000" fill-opacity="0.55"/>
<rect x="544" y="296" width="10" height="17" fill="#ffac00"/>
<rect x="544" y="296" width="10" height="1" fill="#000" fill-opacity="0.55"/>
<rect x="544" y="313" width="10" height="17" fill="#ff8400"/>
<rect x="544" y="313" width="10" height="1" fill="#000" fill-opacity="0.55"/>
<rect x="544" y="330" width="10" height="17" fill="#ff5c00"/>
<rect x="544" y="330" width="10" height="1" fill="#000" fill-opacity="0.55"/>
<rect x="544" y="347" width="10" height="17" fill="#ff0000"/>
<rect x="544" y="347" width="10" height="1" fill="#000" fill-opacity="0.55"/>
</g>
<path d="M588.5 417V432.5H604M587.3 419.5L588.5 417L589.7 419.5M601.5 431.3L604 432.5L601.5 433.7" stroke="#fff" stroke-width="1" fill="none"/>
<text class="y" x="590" y="407">Y</text>
<g>
<circle cx="585" cy="32" r="14" fill="#fff"/>
<path d="M591 19.6A12.6 12.6 0 0 1 591 44V38.5H583.5L580 35.5V28.5L583.5 25.5H591Z" fill="#0f0"/>
<path d="M589.5 19.3A13.3 13.3 0 1 0 589.5 44.7V39.5H582.5L578.5 36V28L582.5 24.5H589.5Z" fill="#00f" stroke="#fff" stroke-width="1.3"/>
</g>
</svg></body></html>
